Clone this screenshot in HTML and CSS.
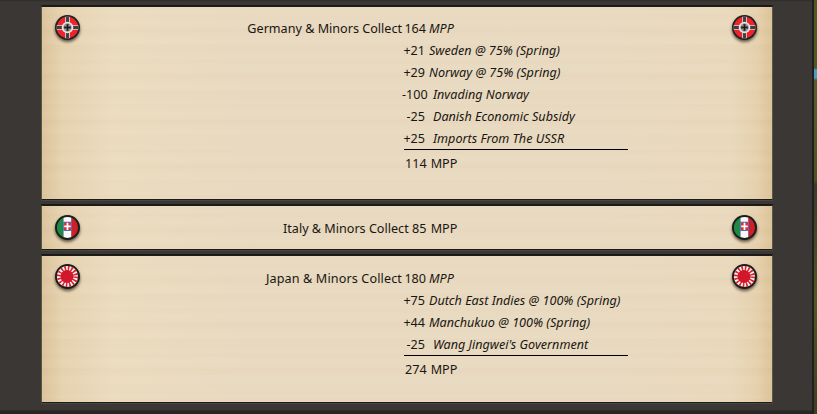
FILE: index.html
```html
<!DOCTYPE html>
<html lang="en">
<head>
<meta charset="utf-8">
<title>Collect MPP</title>
<link rel="stylesheet" href="styles.css">
</head>
<body>
<svg class="defs" width="0" height="0" aria-hidden="true">
  <defs>
    <symbol id="de" viewBox="0 0 26 26">
      <circle cx="13" cy="13" r="13" fill="#1c2321"/>
      <circle cx="13" cy="13" r="11.200" fill="#f0232a"/>
      <path d="M10.600 1.800h4.800v22.400h-4.800zM1.800 10.600h22.400v4.800H1.800z" fill="#d8d8d8"/>
      <path d="M11.500 1.800h3v22.400h-3zM1.800 11.500h22.400v3H1.800z" fill="#3d3f3e"/>
      <circle cx="13" cy="13" r="6" fill="#e6e6e6"/>
      <circle cx="13" cy="13" r="4.400" fill="#9c9c9c"/>
      <path d="M11.800 9.600h2.400l-.4 2.600 2.600-.4v2.400l-2.600-.4.400 2.600h-2.400l.4-2.600-2.600.4v-2.400l2.600.4z" fill="#1a1a1a"/>
    </symbol>
    <symbol id="it" viewBox="0 0 26 26">
      <circle cx="13" cy="13" r="13" fill="#1a1e1c"/>
      <clipPath id="itc"><circle cx="13" cy="13" r="11"/></clipPath>
      <g clip-path="url(#itc)">
        <rect x="2" y="2" width="6.800" height="22" fill="#1f8a45"/>
        <rect x="8.800" y="2" width="8.400" height="22" fill="#fafafa"/>
        <rect x="17.200" y="2" width="7" height="22" fill="#cf2027"/>
      </g>
      <rect x="8.600" y="7" width="8.800" height="9.600" fill="#4a6cc8"/>
      <rect x="9.600" y="8" width="6.800" height="7.600" fill="#e23036"/>
      <path d="M12.100 8h1.800v7.600h-1.800zM9.600 10.900h6.800v1.800H9.600z" fill="#fff"/>
    </symbol>
    <symbol id="jp" viewBox="0 0 26 26">
      <circle cx="13" cy="13" r="13" fill="#1b1b1b"/>
      <circle cx="13" cy="13" r="11" fill="#fbf7f4"/>
      <circle cx="13" cy="13" r="8.300" fill="none" stroke="#d8242e" stroke-width="5.400" stroke-dasharray="1.630 1.630"/>
      <circle cx="12.500" cy="13" r="6.800" fill="#d0172c"/>
    </symbol>
  </defs>
</svg>
<main class="window">
  <section class="panel panel-germany">
    <svg class="flag flag-left"><use href="#de"/></svg>
    <svg class="flag flag-right"><use href="#de"/></svg>
    <div class="ledger">
      <div class="label">Germany &amp; Minors Collect</div><div class="num num-head">164</div><div class="desc">MPP</div>
      <div class="num">+21</div><div class="desc">Sweden @ 75% (Spring)</div>
      <div class="num">+29</div><div class="desc">Norway @ 75% (Spring)</div>
      <div class="num">-100</div><div class="desc shift">Invading Norway</div>
      <div class="num">-25</div><div class="desc shift">Danish Economic Subsidy</div>
      <div class="num">+25</div><div class="desc shift">Imports From The USSR</div>
      <div class="total"><span>114</span><span>MPP</span></div>
    </div>
  </section>
  <section class="panel panel-italy">
    <svg class="flag flag-left"><use href="#it"/></svg>
    <svg class="flag flag-right"><use href="#it"/></svg>
    <div class="single">Italy &amp; Minors Collect 85 <span class="single-unit">MPP</span></div>
  </section>
  <section class="panel panel-japan">
    <svg class="flag flag-left"><use href="#jp"/></svg>
    <svg class="flag flag-right"><use href="#jp"/></svg>
    <div class="ledger">
      <div class="label label-wide">Japan &amp; Minors Collect</div><div class="num num-head">180</div><div class="desc">MPP</div>
      <div class="num">+75</div><div class="desc">Dutch East Indies @ 100% (Spring)</div>
      <div class="num">+44</div><div class="desc">Manchukuo @ 100% (Spring)</div>
      <div class="num">-25</div><div class="desc shift">Wang Jingwei's Government</div>
      <div class="total"><span>274</span><span>MPP</span></div>
    </div>
  </section>
</main>
<div class="map-edge"></div>
</body>
</html>
```
FILE: styles.css
```css
* { box-sizing: border-box; }
html, body { margin: 0; height: 100%; }
body {
  width: 817px;
  height: 414px;
  overflow: hidden;
  background: linear-gradient(to bottom, #2e2c2a 0, #3a3735 2px, #3a3735 410px, #282624 411px);
  font-family: "Noto Sans", sans-serif;
  font-size: 12.6px;
  color: #1a1612;
  position: relative;
}
.defs { position: absolute; }
.map-edge {
  position: absolute;
  top: 0;
  right: 0;
  bottom: 0;
  width: 5px;
  border-left: 2px solid #22201e;
  background: linear-gradient(to bottom, #4f5a22 0, #4f5a22 68px, #4f9ac0 70px, #4f9ac0 78px, #56602a 80px, #4a5522 180px, #3a3c2c 185px, #4f5a22 300px, #3c3f24 414px);
}
.window {
  display: flex;
  flex-direction: column;
  gap: 5px;
  width: 732px;
  margin-left: 41px;
  padding-top: 6px;
}
.panel {
  position: relative;
  border: 1px solid #1e1c1a;
  border-left-color: #5b554c;
  border-right-color: #5b554c;
  box-shadow: 0 -1px 0 #1a1816, 0 1px 0 #4a4642;
  background:
    repeating-linear-gradient(to bottom, rgba(255,255,255,.02) 0, rgba(255,255,255,.02) 7px, rgba(150,115,60,.02) 8px, rgba(255,255,255,.005) 15px),
    repeating-linear-gradient(to bottom, rgba(150,115,60,.012) 0, rgba(255,255,255,.015) 13px, rgba(150,115,60,.02) 23px),
    linear-gradient(to right, #dcc49c 0, #e7d3b0 20px, #ecdcc0 70px, #e9dac1 200px, #e9dac1 560px, #ead9bd 690px, #e6d1ad 715px, #dcc398 731px);
}
.panel-germany { height: 194px; padding-top: 10px; }
.panel-italy { height: 45px; padding-top: 12px; }
.panel-japan { height: 148px; padding-top: 11px; }
.flag {
  position: absolute;
  width: 25px;
  height: 25px;
  filter: drop-shadow(0 2px 1.5px rgba(40,28,14,.7));
}
.panel-germany .flag, .panel-japan .flag { top: 8px; }
.panel-italy .flag { top: 9px; }
.flag-left { left: 13px; }
.flag-right { right: 15px; }
.ledger {
  display: grid;
  grid-template-columns: 360px 24px 1fr;
  grid-auto-rows: 22px;
  align-items: center;
}
.label { text-align: right; white-space: nowrap; }
.label-wide { letter-spacing: .13px; }
.num { grid-column: 2; text-align: right; white-space: nowrap; padding-right: 1px; }
.num-head { padding-right: 0; }
.desc { grid-column: 3; padding-left: 3px; font-style: italic; white-space: nowrap; }
.shift { padding-left: 7px; }
.total {
  grid-column: 2 / 4;
  width: 224px;
  height: 28px;
  margin-left: 2px;
  padding-left: 1px;
  border-top: 1px solid #000;
  display: flex;
  align-items: center;
  gap: 4px;
  align-self: start;
}
.single {
  margin-left: 241px;
  line-height: 22px;
  white-space: nowrap;
}
.single-unit { margin-left: 1px; }
```
